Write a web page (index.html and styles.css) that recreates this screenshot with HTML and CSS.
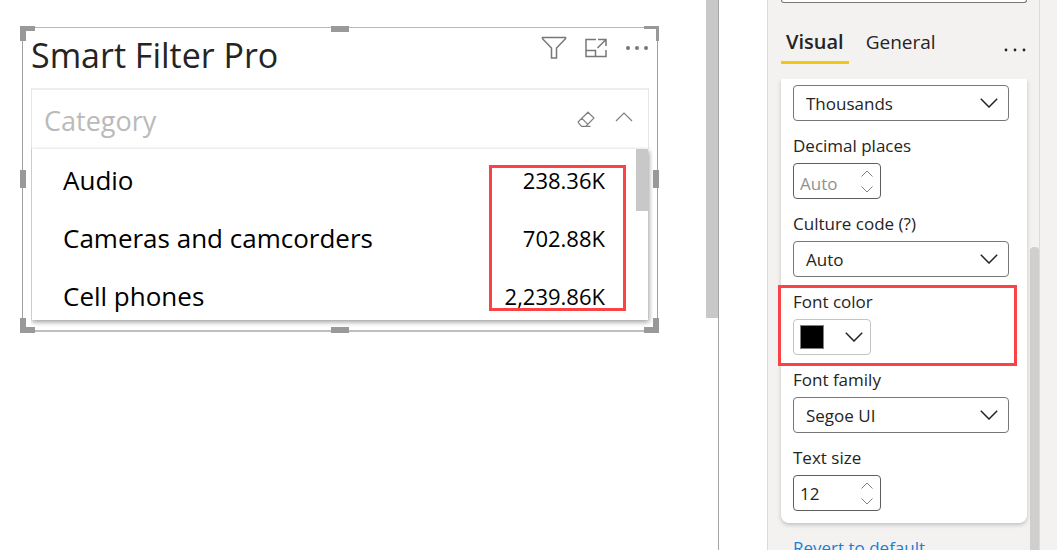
FILE: index.html
```html
<!DOCTYPE html>
<html lang="en">
<head>
<meta charset="utf-8">
<title>Smart Filter Pro</title>
<link rel="stylesheet" href="styles.css">
</head>
<body>
<main class="canvas">
  <section class="visual">
    <header class="visual-header">
      <h1 class="visual-title">Smart Filter Pro</h1>
      <div class="visual-actions">
        <button type="button" class="icon-button" aria-label="Filters">
          <svg width="26" height="24" viewBox="0 0 26 24"><path d="M1.500 1.500h23v1.200L15.500 12v10h-5V12L1.500 2.700z"/></svg>
        </button>
        <button type="button" class="icon-button" aria-label="Focus mode">
          <svg width="22" height="20" viewBox="0 0 22 20"><path d="M11 1.500H1v17h20V12M1 12.500h9.500v6M13 1.500h8V8M21 1.500l-8.500 8.500"/></svg>
        </button>
        <button type="button" class="icon-button" aria-label="More options">
          <svg width="24" height="6" viewBox="0 0 24 6" class="dots"><circle cx="3" cy="3" r="2"/><circle cx="12" cy="3" r="2"/><circle cx="21" cy="3" r="2"/></svg>
        </button>
      </div>
    </header>
    <div class="slicer">
      <div class="slicer-header">
        <h2 class="slicer-title">Category</h2>
        <div class="slicer-actions">
          <button type="button" class="icon-button" aria-label="Clear selection">
            <svg width="18" height="17" viewBox="0 0 18 17" class="thin"><path d="M11 1.200l6 5.800-8.300 8.300H4.500L1.200 11.500v-.8zM4.600 7.200l6 6M4.500 15.300h9"/></svg>
          </button>
          <button type="button" class="icon-button" aria-label="Collapse">
            <svg width="18" height="14" viewBox="0 0 18 14" class="thin"><path d="M1 9l8-8 8 8"/></svg>
          </button>
        </div>
      </div>
      <div class="slicer-body">
        <ul class="items">
          <li class="item"><span>Audio</span><span class="value">238.36K</span></li>
          <li class="item"><span>Cameras and camcorders</span><span class="value">702.88K</span></li>
          <li class="item"><span>Cell phones</span><span class="value">2,239.86K</span></li>
        </ul>
        <div class="items-track"><div class="items-thumb"></div></div>
        <div class="mark mark-values"></div>
      </div>
    </div>
    <i class="handle corner top-left"></i>
    <i class="handle side top"></i>
    <i class="handle corner top-right"></i>
    <i class="handle side left"></i>
    <i class="handle side right"></i>
    <i class="handle corner bottom-left"></i>
    <i class="handle side bottom"></i>
    <i class="handle corner bottom-right"></i>
  </section>
  <div class="canvas-thumb"></div>
</main>
<aside class="pane">
  <div class="pane-content">
    <div class="search-edge"></div>
    <nav class="tabs">
      <button type="button" class="tab active">Visual</button>
      <button type="button" class="tab">General</button>
      <button type="button" class="tab-more" aria-label="More options">
        <svg width="24" height="6" viewBox="0 0 24 6"><circle cx="3" cy="3" r="1.400"/><circle cx="12" cy="3" r="1.400"/><circle cx="21" cy="3" r="1.400"/></svg>
      </button>
    </nav>
    <form class="card">
      <div class="field">
        <div class="select-box">
          <select class="select" aria-label="Display units"><option>Thousands</option></select>
          <svg class="chevron" width="18" height="10" viewBox="0 0 18 10"><path d="M.8.800L9 9 17.200.800"/></svg>
        </div>
      </div>
      <div class="field">
        <label class="label" for="decimals">Decimal places</label>
        <div class="number-box">
          <input class="number" id="decimals" type="text" placeholder="Auto">
          <div class="stepper">
            <button type="button" class="step" aria-label="Increase"><svg width="12" height="7" viewBox="0 0 12 7"><path d="M.5 6.500L6 1l5.500 5.500"/></svg></button>
            <button type="button" class="step" aria-label="Decrease"><svg width="12" height="7" viewBox="0 0 12 7"><path d="M.5.500L6 6 11.500.500"/></svg></button>
          </div>
        </div>
      </div>
      <div class="field">
        <label class="label" for="culture">Culture code (?)</label>
        <div class="select-box">
          <select class="select" id="culture"><option>Auto</option></select>
          <svg class="chevron" width="18" height="10" viewBox="0 0 18 10"><path d="M.8.800L9 9 17.200.800"/></svg>
        </div>
      </div>
      <div class="field">
        <span class="label" id="color-label">Font color</span>
        <button type="button" class="color-button" aria-labelledby="color-label">
          <span class="swatch"></span>
          <svg width="18" height="10" viewBox="0 0 18 10"><path d="M.8.800L9 9 17.200.800"/></svg>
        </button>
        <div class="mark mark-color"></div>
      </div>
      <div class="field">
        <label class="label" for="family">Font family</label>
        <div class="select-box">
          <select class="select" id="family"><option>Segoe UI</option></select>
          <svg class="chevron" width="18" height="10" viewBox="0 0 18 10"><path d="M.8.800L9 9 17.200.800"/></svg>
        </div>
      </div>
      <div class="field">
        <label class="label" for="size">Text size</label>
        <div class="number-box">
          <input class="number" id="size" type="text" value="12">
          <div class="stepper">
            <button type="button" class="step" aria-label="Increase"><svg width="12" height="7" viewBox="0 0 12 7"><path d="M.5 6.500L6 1l5.500 5.500"/></svg></button>
            <button type="button" class="step" aria-label="Decrease"><svg width="12" height="7" viewBox="0 0 12 7"><path d="M.5.500L6 6 11.500.500"/></svg></button>
          </div>
        </div>
      </div>
    </form>
    <a class="revert" href="#">Revert to default</a>
  </div>
  <div class="pane-thumb"></div>
</aside>
<div class="gutter"></div>
</body>
</html>
```

FILE: styles.css
```css
* {
  box-sizing: border-box;
}

body {
  display: flex;
  height: 100vh;
  margin: 0;
  overflow: hidden;
  background: #fff;
  color: #252423;
  font-family: "Open Sans", "Noto Sans", sans-serif;
  font-size: 16px;
}

button {
  padding: 0;
  border: 0;
  background: none;
  color: inherit;
  font: inherit;
}

svg {
  display: block;
  fill: none;
  stroke: currentColor;
}

/* Report canvas */
.canvas {
  display: flex;
  flex: 1;
  align-items: flex-start;
  justify-content: space-between;
  padding-left: 22px;
  border-right: 1px solid #a6a6a6;
}

.canvas-thumb {
  width: 12px;
  height: 318px;
  background: #c8c8c8;
}

.visual {
  position: relative;
  flex: 1;
  margin: 27px 48px 0 0;
  padding: 0 8px 10px;
  border: 1px solid #a0a0a0;
  border-top-color: #b8b8b8;
  border-bottom: 2px solid #bfbfbf;
}

.visual-header {
  display: flex;
  justify-content: space-between;
  height: 60px;
}

.visual-title {
  margin: 0;
  font-size: 34px;
  font-weight: 400;
  line-height: 54px;
}

.visual-actions {
  display: flex;
  align-items: center;
  gap: 18px;
  height: 40px;
  color: #777;
}

.icon-button svg {
  stroke-width: 1.5;
}

.icon-button .thin {
  stroke-width: 1.2;
}

.icon-button .dots {
  fill: currentColor;
  stroke: none;
}

.slicer {
  color: #000;
}

.slicer-header {
  display: flex;
  align-items: center;
  justify-content: space-between;
  height: 61px;
  padding: 2px 15px 0 12px;
  border: 1px solid #e6e6e6;
  border-top: 2px solid #eee;
  border-bottom: 0;
}

.slicer-title {
  margin: 0;
  color: #bababa;
  font-size: 27px;
  font-weight: 400;
}

.slicer-actions {
  display: flex;
  align-items: center;
  gap: 20px;
  padding-bottom: 3px;
  color: #808080;
}

.slicer-body {
  position: relative;
  display: flex;
  height: 171px;
  margin-right: 1px;
  border-left: 1px solid #ccc;
  background: #fff;
  box-shadow: 1px 2px 5px rgba(0, 0, 0, 0.4);
  clip-path: inset(-2px -5px -7px 0);
}

.items {
  flex: 1;
  margin: 0;
  padding: 2px 31px 0;
  overflow: hidden;
  list-style: none;
}

.item {
  display: flex;
  align-items: center;
  justify-content: space-between;
  height: 58px;
  font-size: 26px;
}

.value {
  font-size: 22px;
}

.items-track {
  width: 12px;
}

.items-thumb {
  height: 62px;
  background: #c8c8c8;
}

/* Selection handles */
.handle {
  position: absolute;
  border: 0 solid #999;
}

.corner {
  width: 15px;
  height: 15px;
}

.top-left {
  top: -2px;
  left: -3px;
  border-width: 5px 0 0 6px;
}

.top-right {
  top: -2px;
  right: -2px;
  border-width: 3px 3px 0 0;
}

.bottom-left {
  bottom: -3px;
  left: -3px;
  border-width: 0 0 6px 6px;
}

.bottom-right {
  right: -2px;
  bottom: -3px;
  border-width: 0 6px 6px 0;
}

.side {
  background: #999;
}

.side.top,
.side.bottom {
  left: calc(50% - 9px);
  width: 18px;
  height: 6px;
}

.side.top {
  top: -2px;
}

.side.bottom {
  bottom: -3px;
}

.side.left,
.side.right {
  top: calc(50% - 9px);
  width: 6px;
  height: 18px;
}

.side.left {
  left: -3px;
}

.side.right {
  right: -2px;
}

/* Red call-outs */
.mark {
  position: absolute;
  border: 3px solid #fb4245;
  pointer-events: none;
}

.mark-values {
  top: 16px;
  right: 22px;
  width: 137px;
  height: 146px;
}

.mark-color {
  inset: 8px -8px -11px -15px;
}

/* Format pane */
.pane {
  display: flex;
  flex: none;
  width: 273px;
  margin-left: 48px;
  border: 1px solid #dcdbd9;
  border-width: 0 1px;
  background: #f3f2f1;
}

.pane-content {
  flex: 1;
  padding: 0 3px 0 13px;
}

.search-edge {
  height: 3px;
  border: 1px solid #777;
  border-top: 0;
  border-radius: 0 0 4px 4px;
  background: #fff;
}

.tabs {
  display: flex;
  align-items: flex-start;
  height: 76px;
  padding-top: 20px;
  gap: 12px;
}

.tab {
  height: 41px;
  padding: 0 5px;
  border-bottom: 3px solid transparent;
  font-size: 19px;
  line-height: 38px;
}

.tab.active {
  border-color: #f2c811;
  font-size: 20px;
  font-weight: 600;
}

.tab-more {
  margin: 24px 0 0 auto;
}

.tab-more svg {
  fill: currentColor;
  stroke: none;
}

.card {
  padding: 6px 18px 12px 12px;
  border-radius: 0 0 8px 8px;
  background: #fff;
  box-shadow: 0 2px 4px rgba(0, 0, 0, 0.2);
  clip-path: inset(0 -6px -8px);
}

.field {
  position: relative;
}

.field + .field {
  padding-top: 16px;
}

.label {
  display: block;
  margin-bottom: 8px;
  font-size: 17px;
  line-height: 18px;
}

.select-box {
  position: relative;
}

.select {
  display: block;
  width: 100%;
  height: 36px;
  padding: 0 32px 0 12px;
  border: 1px solid #777;
  border-radius: 4px;
  appearance: none;
  background: #fff;
  color: inherit;
  font: inherit;
  font-size: 17px;
}

.chevron {
  position: absolute;
  top: 13px;
  right: 11px;
  pointer-events: none;
}

.chevron,
.color-button svg {
  stroke-width: 1.5;
}

.number-box {
  display: flex;
  width: 88px;
  height: 36px;
  border: 1px solid #605e5c;
  border-radius: 4px;
  background: #fff;
}

.number {
  flex: 1;
  min-width: 0;
  padding: 0 0 0 6px;
  border: 0;
  outline: 0;
  background: none;
  color: inherit;
  font: inherit;
  font-size: 17px;
}

.number:placeholder-shown {
  padding-top: 4px;
}

.number::placeholder {
  color: #919191;
}

.stepper {
  display: flex;
  flex-direction: column;
  justify-content: center;
  gap: 9px;
  padding-right: 7px;
  color: #808080;
}

.color-button {
  display: flex;
  align-items: center;
  justify-content: space-between;
  width: 78px;
  height: 36px;
  padding: 0 7px 0 6px;
  border: 1px solid #c4c4c4;
  border-radius: 4px;
}

.swatch {
  width: 24px;
  height: 24px;
  border: 1px solid #808080;
  background: #000;
}

.revert {
  display: block;
  padding: 14px 12px 0;
  color: #1a7fd4;
  font-size: 17px;
  line-height: 22px;
  text-decoration: none;
}

.pane-thumb {
  flex: none;
  width: 9px;
  margin-top: 247px;
  border-radius: 4px 4px 0 0;
  background: #d0cfce;
}

.gutter {
  flex: none;
  width: 17px;
  background: #f3f2f1;
}
```
